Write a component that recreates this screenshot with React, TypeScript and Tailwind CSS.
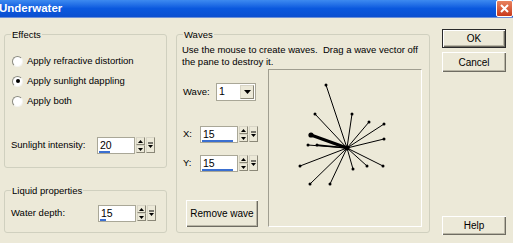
import React from "react";

const font = { fontFamily: '"Liberation Sans", Arial, sans-serif' };

const lines: [number, number, number][] = [
  [57, 15, 1],
  [46, 44, 1],
  [83, 44, 1],
  [100, 52, 1],
  [115, 54, 1],
  [115, 69, 1],
  [42, 65, 3],
  [39, 75, 1],
  [48, 75, 1.6],
  [31, 96, 1],
  [41, 114, 1],
  [61, 114, 1],
  [84, 99, 1],
  [98, 96, 1],
  [114, 96, 1],
];

const Radio = ({ label, checked }: { label: string; checked?: boolean }) => (
  <div className="flex items-center h-[12px] gap-[4px]">
    <div className="w-[11px] h-[11px] rounded-full bg-white border border-[#8a8a80] border-b-[#f4f4f0] border-r-[#f4f4f0] flex items-center justify-center">
      {checked && <div className="w-[4px] h-[4px] rounded-full bg-black" />}
    </div>
    <span>{label}</span>
  </div>
);

const Spinner = ({ value, bar }: { value: string; bar: string }) => (
  <div className="flex items-start h-[17px]">
    <div className="relative w-[38px] h-[17px] bg-white border border-[#a9a797] pl-[2px] leading-[15px] text-[10.5px]">
      {value}
      <div className={`absolute left-[1px] bottom-[0px] h-[2px] bg-[#3a6fd0] ${bar}`} />
    </div>
    <div className="ml-[1px] w-[9px] h-[16px] flex flex-col">
      <div className="h-[8px] bg-[#ECE9D8] border border-[#d8d5c6] border-b-[#8b8878] border-r-[#8b8878] flex items-center justify-center">
        <svg width="5" height="3" viewBox="0 0 5 3"><path d="M2.5 0L5 3H0z" fill="#000" /></svg>
      </div>
      <div className="h-[8px] bg-[#ECE9D8] border border-[#d8d5c6] border-b-[#8b8878] border-r-[#8b8878] flex items-center justify-center">
        <svg width="5" height="3" viewBox="0 0 5 3"><path d="M0 0H5L2.5 3z" fill="#000" /></svg>
      </div>
    </div>
    <div className="ml-[1px] w-[9px] h-[16px] bg-[#ECE9D8] border border-[#d8d5c6] border-b-[#8b8878] border-r-[#8b8878] flex items-center justify-center">
      <svg width="5" height="7" viewBox="0 0 5 7">
        <path d="M0 1H5" stroke="#000" strokeWidth="1" />
        <path d="M0 3H5L2.5 6z" fill="#000" />
      </svg>
    </div>
  </div>
);

const Button = ({ label, def, className }: { label: string; def?: boolean; className: string }) => (
  <button
    className={`flex items-center justify-center bg-[#ECE9D8] ${
      def ? "border border-[#2a2a2a]" : ""
    } ${className}`}
  >
    <div className="w-full h-full flex items-center justify-center shadow-[inset_1px_1px_#fff,inset_-1px_-1px_#6e6c62,inset_-2px_-2px_#b9b6a6]">
      {label}
    </div>
  </button>
);

export default function App() {
  return (
    <div style={font} className="w-[513px] h-[243px] bg-[#ECE9D8] overflow-hidden text-[9.5px] text-black">
      <div className="h-[18px] flex items-center justify-between bg-gradient-to-b from-[#3d8af0] via-[#0a58de] to-[#0b4fd0] border-b border-[#6b8fd8]">
        <span className="text-white font-bold text-[11.5px] -ml-[1px]">Underwater</span>
        <div className="w-[17px] h-[17px] mt-[-1px] rounded-[2px] bg-gradient-to-b from-[#e8825e] to-[#c8381a] border border-white flex items-center justify-center">
          <svg width="9" height="9" viewBox="0 0 9 9">
            <path d="M1 1L8 8M8 1L1 8" stroke="#fff" strokeWidth="2" />
          </svg>
        </div>
      </div>

      <div className="flex items-start">
        <div className="ml-[4px] mt-[16px] w-[163px] flex flex-col">
          <div className="relative h-[134px] border border-[#d0d0bf] rounded-[3px] pl-[7px] pt-[20px]">
            <span className="absolute left-[6px] -top-[7px] px-[1px] bg-[#ECE9D8]">Effects</span>
            <div className="flex flex-col gap-[8px]">
              <Radio label="Apply refractive distortion" />
              <Radio label="Apply sunlight dappling" checked />
              <Radio label="Apply both" />
            </div>
            <div className="flex items-center mt-[30px] -ml-[1px]">
              <span className="w-[86px]">Sunlight intensity:</span>
              <Spinner value="20" bar="w-[11px]" />
            </div>
          </div>
          <div className="relative mt-[22px] h-[43px] border border-[#d0d0bf] rounded-[3px] pl-[6px] pt-[14px]">
            <span className="absolute left-[6px] -top-[7px] px-[1px] bg-[#ECE9D8]">Liquid properties</span>
            <div className="flex items-center">
              <span className="w-[87px]">Water depth:</span>
              <Spinner value="15" bar="w-[6px]" />
            </div>
          </div>
        </div>

        <div className="relative ml-[9px] mt-[16px] w-[254px] h-[199px] border border-[#d0d0bf] rounded-[3px] pl-[5px] pt-[9px]">
          <span className="absolute left-[6px] -top-[7px] px-[1px] bg-[#ECE9D8]">Waves</span>
          <div className="leading-[12px] whitespace-pre">Use the mouse to create waves.  Drag a wave vector off</div>
          <div className="leading-[12px]">the pane to destroy it.</div>
          <div className="flex mt-[1px] -ml-[5px]">
            <div className="w-[91px] flex flex-col">
              <div className="flex items-center mt-[14px] pl-[6px]">
                <span className="w-[33px]">Wave:</span>
                <div className="w-[40px] h-[18px] bg-white border border-[#a9a797] flex items-center">
                  <span className="pl-[2px] text-[10.5px] flex-1">1</span>
                  <div className="w-[14px] h-[14px] mr-[1px] bg-[#ECE9D8] border border-[#d8d5c6] border-b-[#8b8878] border-r-[#8b8878] flex items-center justify-center">
                    <svg width="7" height="4" viewBox="0 0 7 4"><path d="M0 0H7L3.5 4z" fill="#000" /></svg>
                  </div>
                </div>
              </div>
              <div className="flex items-center mt-[25px] pl-[6px]">
                <span className="w-[17px]">X:</span>
                <Spinner value="15" bar="w-[31px]" />
              </div>
              <div className="flex items-center mt-[12px] pl-[6px]">
                <span className="w-[17px]">Y:</span>
                <Spinner value="15" bar="w-[31px]" />
              </div>
              <Button label="Remove wave" className="mt-[28px] ml-[9px] w-[72px] h-[27px] text-[10px]" />
            </div>
            <div className="w-[154px] h-[158px] border border-[#a09e90] border-b-white border-r-white">
              <svg width="152" height="156" viewBox="0 0 152 156">
                {lines.map(([x, y, w], i) => (
                  <g key={i}>
                    <line x1="78" y1="78" x2={x} y2={y} stroke="#000" strokeWidth={w} />
                    <circle cx={x} cy={y} r={w > 2 ? 2.6 : 1.5} fill="#000" />
                  </g>
                ))}
                <circle cx="78" cy="78" r="2.5" fill="#000" />
              </svg>
            </div>
          </div>
        </div>

        <div className="ml-[12px] mt-[11px] w-[64px] h-[206px] flex flex-col">
          <Button label="OK" def className="h-[19px] text-[10px]" />
          <Button label="Cancel" className="mt-[4px] h-[20px] text-[10px]" />
          <Button label="Help" className="mt-auto h-[19px] text-[10px]" />
        </div>
      </div>
    </div>
  );
}
